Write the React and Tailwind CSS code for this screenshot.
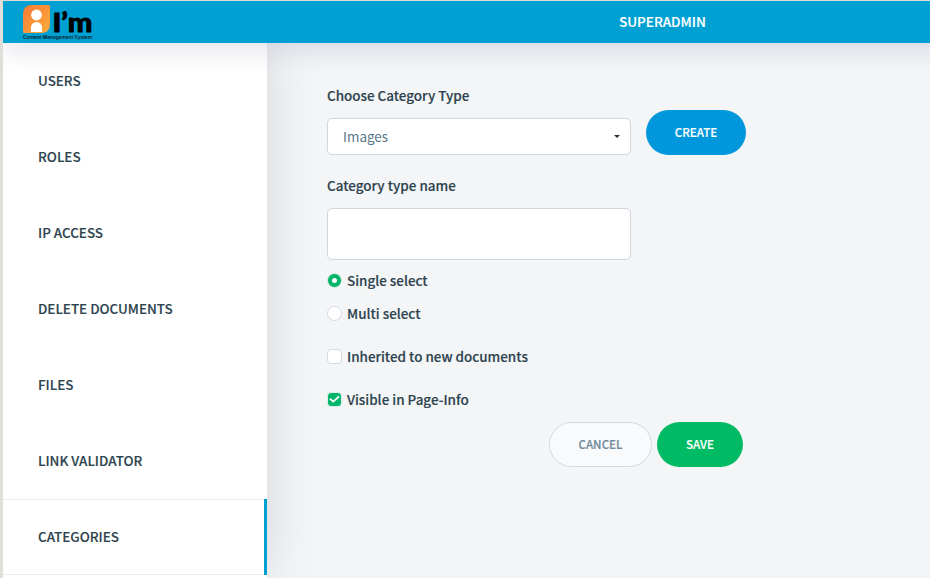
import React from "react";

const NAV_ITEMS = ["USERS", "ROLES", "IP ACCESS", "DELETE DOCUMENTS", "FILES", "LINK VALIDATOR", "CATEGORIES"];

function Logo() {
  return (
    <svg width="72" height="37" viewBox="0 0 72 37" className="ml-5 mt-1 shrink-0 [-webkit-text-stroke:0]">
      <defs>
        <linearGradient id="badge" x1="0" y1="0" x2="1" y2="1">
          <stop offset="0" stopColor="#f47a35" />
          <stop offset="1" stopColor="#ffad3d" />
        </linearGradient>
      </defs>
      <path d="M9 0H26Q27 0 27 1V19Q27 28 18 28H1Q0 28 0 27V9Q0 0 9 0Z" fill="url(#badge)" />
      <circle cx="13.5" cy="10" r="5.4" fill="#fff" />
      <path d="M8 27V22.5a5.5 5.5 0 0 1 11 0V27Z" fill="#fff" />
      <text x="29.5" y="26.5" fontFamily="Lato, sans-serif" fontWeight="900" fontSize="26" textLength="40" lengthAdjust="spacingAndGlyphs" fill="#000" stroke="#000" strokeWidth="0.8" strokeLinejoin="round">I’m</text>
      <text x="0" y="33.8" fontFamily="Inter, sans-serif" fontWeight="600" fontSize="4.6" textLength="69" lengthAdjust="spacingAndGlyphs" fill="#04202b">Content Management System</text>
    </svg>
  );
}

function Option({ label, round = false, checked = false, className = "" }) {
  return (
    <label className={`flex h-5 items-center gap-[5px] ${className}`}>
      <span
        className={`flex size-[15px] items-center justify-center border ${round ? "rounded-full" : "rounded-[4px]"} ${
          checked ? "border-[#dfeee9] bg-[#00b56a]" : "border-[#d4dae1] bg-white"
        }`}
      >
        {checked && round && <span className="size-[5px] rounded-full bg-white" />}
        {checked && !round && (
          <svg width="11" height="11" viewBox="0 0 11 11" fill="none">
            <path d="M0.9 4.7 4.2 7.7 10.1 2.4" stroke="#fff" strokeWidth="1.7" />
          </svg>
        )}
      </span>
      <span>{label}</span>
    </label>
  );
}

function NavItem({ label, active }) {
  return (
    <a className={`flex h-[76px] items-center justify-between pl-[35px] ${active ? "border-y border-[#ebebeb]" : ""}`}>
      <span className="pb-0.5">{label}</span>
      {active && <span className="-my-px w-[3px] self-stretch bg-[#00a0d2]" />}
    </a>
  );
}

export default function App() {
  return (
    <div className="h-[578px] w-[930px] bg-[#e1ddd8] pl-[3px] pt-px font-['Noto_Sans_CJK_SC',sans-serif] text-[13.45px] font-medium leading-5 text-[#2d434e] [-webkit-text-stroke:0.15px]">
      <div className="h-full overflow-hidden">
        <header className="relative z-20 flex h-[42px] w-[980px] bg-[#00a0d2] shadow-[0_4px_30px_rgba(22,24,90,0.14)]">
          <Logo />
          <span className="ml-[524px] mt-[10px] text-[13.5px] text-white">SUPERADMIN</span>
        </header>
        <div className="flex h-[535px]">
          <nav className="relative z-10 w-[264px] shrink-0 bg-white text-[13.4px] shadow-[0_0_50px_rgba(0,0,0,0.13)]">
            {NAV_ITEMS.map((item) => (
              <NavItem key={item} label={item} active={item === "CATEGORIES"} />
            ))}
          </nav>
          <main className="grow bg-[#f3f5f7] pl-[60px] pt-[42px]">
            <div className="flex">
              <div className="w-[304px]">
                <div>Choose Category Type</div>
                <div className="mt-[13px] flex h-[37px] items-center justify-between rounded-[5px] border border-[#d1d7de] bg-white pl-[15px] pr-[10px] font-normal text-[#587687] [-webkit-text-stroke:0]">
                  <span className="-mt-0.5">Images</span>
                  <span className="border-x-[3px] border-t-[3px] border-x-transparent border-t-[#203640]" />
                </div>
              </div>
              <button className="ml-[15px] mt-[25px] h-[45px] w-[100px] rounded-full bg-[#0097dc] pb-0.5 text-[11.6px] text-white">CREATE</button>
            </div>
            <div className="mt-[20px]">Category type name</div>
            <input className="mt-[13px] block h-[52px] w-[304px] rounded-[5px] border border-[#d1d7de] bg-white" />
            <Option className="mt-[10px]" label="Single select" round checked />
            <Option className="mt-[13px]" label="Multi select" round />
            <Option className="mt-[23px]" label="Inherited to new documents" />
            <Option className="mt-[23px]" label="Visible in Page-Info" checked />
            <div className="ml-[222px] mt-[13px] flex gap-[5px] text-[11.6px]">
              <button className="h-[45px] w-[103px] rounded-full border border-[#d5dade] bg-[#f9fafc] pb-0.5 text-[#71899a]">CANCEL</button>
              <button className="h-[45px] w-[86px] rounded-full bg-[#00bb63] pb-0.5 text-white">SAVE</button>
            </div>
          </main>
        </div>
      </div>
    </div>
  );
}
